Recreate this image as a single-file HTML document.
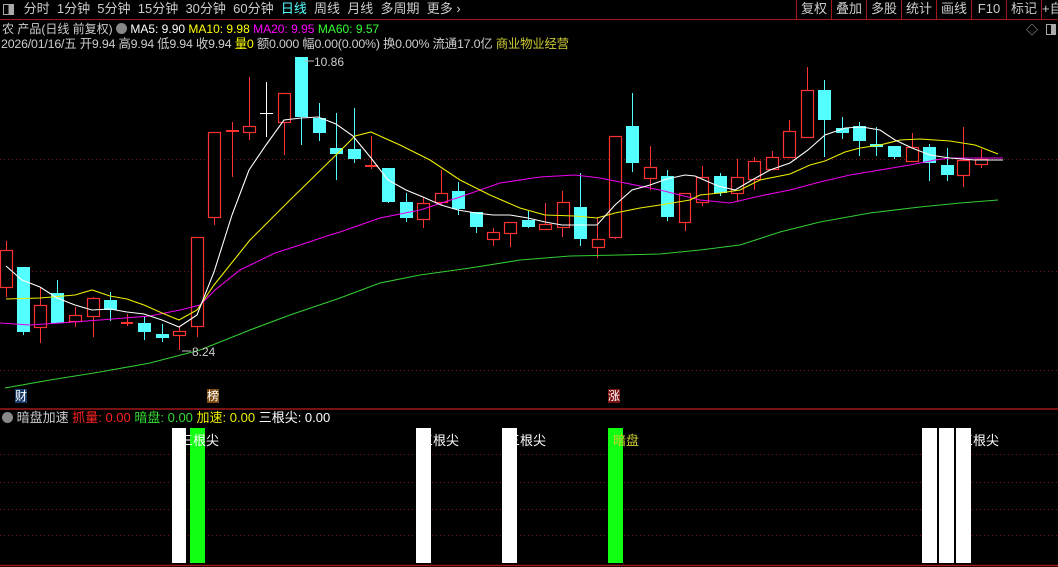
<!DOCTYPE html>
<html><head><meta charset="utf-8"><style>
body{margin:0;background:#000;width:1058px;height:567px;overflow:hidden;font-family:"Liberation Sans","Noto Sans CJK SC",sans-serif;position:relative}
.t{position:absolute;white-space:nowrap;font-size:13px;line-height:16px}
.b{position:absolute;top:0;height:19px;width:34px;border-left:1px solid #a01818;color:#ccc;font-size:13px;line-height:18px;text-align:center;white-space:nowrap;overflow:hidden}
</style></head><body>
<div class="t" style="left:3px;top:1px;color:#ccc;font-size:13px">
<span style="display:inline-block;width:11px;height:11px;border:1px solid #aaa;vertical-align:-2px;box-sizing:border-box;background:linear-gradient(90deg,#000 50%,#aaa 50%)"></span>
<span style="margin-left:6px">分时&nbsp; 1分钟&nbsp; 5分钟&nbsp; 15分钟&nbsp; 30分钟&nbsp; 60分钟&nbsp; <span style="color:#5ff">日线</span>&nbsp; 周线&nbsp; 月线&nbsp; 多周期&nbsp; 更多 ›</span></div>
<div style="position:absolute;left:0;top:19px;width:1058px;height:1px;background:#a01818"></div>
<div class="b" style="left:796px">复权</div><div class="b" style="left:831px">叠加</div><div class="b" style="left:866px">多股</div><div class="b" style="left:901px">统计</div><div class="b" style="left:936px">画线</div><div class="b" style="left:971px">F10</div><div class="b" style="left:1006px">标记</div><div class="b" style="left:1041px;width:20px;text-align:left">+自</div>
<div class="t" style="left:2px;top:21px;color:#ccc;font-size:12px">农 产品(日线 前复权) <span style="display:inline-block;width:11px;height:11px;border-radius:50%;background:#888;vertical-align:-1px"></span> <span style="color:#fff">MA5: 9.90</span> <span style="color:#ff0">MA10: 9.98</span> <span style="color:#f0f">MA20: 9.95</span> <span style="color:#3f3">MA60: 9.57</span></div>
<div class="t" style="left:1px;top:36px;color:#ccc;font-size:12.4px;letter-spacing:-0.2px">2026/01/16/五 开9.94 高9.94 低9.94 收9.94 <span style="color:#ff0">量0</span> 额0.000 幅0.00(0.00%) 换0.00% 流通17.0亿 <span style="color:#cc3">商业物业经营</span></div>
<div class="t" style="left:1026px;top:22px;color:#aaa;font-size:12px">◇</div>
<div style="position:absolute;left:1046px;top:24px;width:10px;height:11px;border:1px solid #aaa;box-sizing:border-box;background:linear-gradient(90deg,#000 50%,#aaa 50%)"></div>
<svg width="1058" height="567" style="position:absolute;left:0;top:0" xmlns="http://www.w3.org/2000/svg">
<g stroke="#7a1515" stroke-dasharray="1,3" stroke-width="1">
<line x1="0" y1="159.5" x2="1058" y2="159.5"/><line x1="0" y1="271.5" x2="1058" y2="271.5"/><line x1="0" y1="370.5" x2="1058" y2="370.5"/>
<line x1="0" y1="454.5" x2="1058" y2="454.5"/><line x1="0" y1="482.5" x2="1058" y2="482.5"/><line x1="0" y1="509.5" x2="1058" y2="509.5"/><line x1="0" y1="535.5" x2="1058" y2="535.5"/>
</g>
<line x1="0" y1="409" x2="1058" y2="409" stroke="#a01818" stroke-width="1.5"/>
<line x1="0" y1="565.5" x2="1058" y2="565.5" stroke="#a01818" stroke-width="1.5"/>
<g stroke="#ff3232" stroke-width="1" fill="none">
<line x1="6.5" y1="241" x2="6.5" y2="297"/><line x1="40.5" y1="287" x2="40.5" y2="343"/><line x1="75.5" y1="307" x2="75.5" y2="327"/><line x1="93.5" y1="297" x2="93.5" y2="337"/><line x1="127.5" y1="314" x2="127.5" y2="326"/><line x1="179.5" y1="327" x2="179.5" y2="350"/><line x1="197.5" y1="326" x2="197.5" y2="337"/><line x1="214.5" y1="217" x2="214.5" y2="225"/><line x1="232.5" y1="122" x2="232.5" y2="177"/><line x1="249.5" y1="77" x2="249.5" y2="140"/><line x1="284.5" y1="122" x2="284.5" y2="155"/><line x1="371.5" y1="136" x2="371.5" y2="169"/><line x1="423.5" y1="197" x2="423.5" y2="228"/><line x1="441.5" y1="170" x2="441.5" y2="205"/><line x1="493.5" y1="228" x2="493.5" y2="246"/><line x1="510.5" y1="233" x2="510.5" y2="247"/><line x1="545.5" y1="203" x2="545.5" y2="229"/><line x1="562.5" y1="191" x2="562.5" y2="237"/><line x1="597.5" y1="217" x2="597.5" y2="258"/><line x1="615.5" y1="237" x2="615.5" y2="239"/><line x1="650.5" y1="146" x2="650.5" y2="190"/><line x1="685.5" y1="222" x2="685.5" y2="231"/><line x1="702.5" y1="166" x2="702.5" y2="206"/><line x1="737.5" y1="159" x2="737.5" y2="201"/><line x1="754.5" y1="157" x2="754.5" y2="190"/><line x1="772.5" y1="151" x2="772.5" y2="169"/><line x1="789.5" y1="120" x2="789.5" y2="157"/><line x1="807.5" y1="67" x2="807.5" y2="90"/><line x1="912.5" y1="133" x2="912.5" y2="161"/><line x1="963.5" y1="127" x2="963.5" y2="187"/><line x1="981.5" y1="149" x2="981.5" y2="168"/>
</g>
<g stroke="#ff3232" stroke-width="1.2" fill="#000">
<rect x="0.5" y="250.5" width="12" height="37"/><rect x="34.5" y="305.5" width="12" height="22"/><rect x="69.5" y="315.5" width="12" height="6"/><rect x="87.5" y="298.5" width="12" height="18"/><rect x="173.5" y="331.5" width="12" height="4"/><rect x="191.5" y="237.5" width="12" height="89"/><rect x="208.5" y="132.5" width="12" height="85"/><rect x="243.5" y="126.5" width="12" height="6"/><rect x="278.5" y="93.5" width="12" height="29"/><rect x="417.5" y="203.5" width="12" height="16"/><rect x="435.5" y="193.5" width="12" height="9"/><rect x="487.5" y="232.5" width="12" height="7"/><rect x="504.5" y="222.5" width="12" height="11"/><rect x="539.5" y="224.5" width="12" height="5"/><rect x="557.5" y="202.5" width="12" height="25"/><rect x="592.5" y="239.5" width="12" height="8"/><rect x="609.5" y="136.5" width="12" height="101"/><rect x="644.5" y="167.5" width="12" height="11"/><rect x="679.5" y="193.5" width="11" height="29"/><rect x="696.5" y="177.5" width="12" height="25"/><rect x="731.5" y="177.5" width="12" height="16"/><rect x="748.5" y="161.5" width="12" height="18"/><rect x="766.5" y="157.5" width="12" height="12"/><rect x="783.5" y="131.5" width="12" height="26"/><rect x="801.5" y="90.5" width="12" height="47"/><rect x="906.5" y="147.5" width="12" height="14"/><rect x="957.5" y="160.5" width="12" height="15"/><rect x="975.5" y="159.5" width="12" height="5"/>
</g>
<g stroke="#ff3232" stroke-width="2"><line x1="121" y1="323" x2="133" y2="323"/><line x1="226" y1="131" x2="239" y2="131"/><line x1="365" y1="166" x2="378" y2="166"/></g>
<g stroke="#fff" stroke-width="1"><line x1="266.5" y1="82" x2="266.5" y2="137"/><line x1="260" y1="113.5" x2="273" y2="113.5"/></g>
<g stroke="#54ffff" stroke-width="1">
<line x1="23.5" y1="267" x2="23.5" y2="335"/><line x1="57.5" y1="280" x2="57.5" y2="323"/><line x1="110.5" y1="292" x2="110.5" y2="321"/><line x1="144.5" y1="317" x2="144.5" y2="340"/><line x1="162.5" y1="324" x2="162.5" y2="342"/><line x1="301.5" y1="57" x2="301.5" y2="145"/><line x1="319.5" y1="103" x2="319.5" y2="141"/><line x1="336.5" y1="113" x2="336.5" y2="180"/><line x1="354.5" y1="108" x2="354.5" y2="163"/><line x1="388.5" y1="168" x2="388.5" y2="203"/><line x1="406.5" y1="193" x2="406.5" y2="222"/><line x1="458.5" y1="182" x2="458.5" y2="215"/><line x1="476.5" y1="212" x2="476.5" y2="233"/><line x1="528.5" y1="211" x2="528.5" y2="228"/><line x1="580.5" y1="173" x2="580.5" y2="246"/><line x1="632.5" y1="93" x2="632.5" y2="172"/><line x1="667.5" y1="170" x2="667.5" y2="221"/><line x1="720.5" y1="173" x2="720.5" y2="196"/><line x1="824.5" y1="80" x2="824.5" y2="157"/><line x1="842.5" y1="117" x2="842.5" y2="139"/><line x1="859.5" y1="122" x2="859.5" y2="156"/><line x1="876.5" y1="127" x2="876.5" y2="156"/><line x1="894.5" y1="146" x2="894.5" y2="159"/><line x1="929.5" y1="144" x2="929.5" y2="181"/><line x1="947.5" y1="148" x2="947.5" y2="181"/>
</g>
<g fill="#54ffff">
<rect x="17" y="267" width="13" height="65"/><rect x="51" y="293" width="13" height="30"/><rect x="104" y="300" width="13" height="10"/><rect x="138" y="323" width="13" height="9"/><rect x="156" y="334" width="13" height="4"/><rect x="295" y="57" width="13" height="60"/><rect x="313" y="118" width="13" height="15"/><rect x="330" y="148" width="13" height="6"/><rect x="348" y="149" width="13" height="10"/><rect x="382" y="168" width="13" height="34"/><rect x="400" y="202" width="13" height="16"/><rect x="452" y="191" width="13" height="18"/><rect x="470" y="212" width="13" height="15"/><rect x="522" y="220" width="13" height="7"/><rect x="574" y="207" width="13" height="32"/><rect x="626" y="126" width="13" height="37"/><rect x="661" y="176" width="13" height="41"/><rect x="714" y="176" width="13" height="17"/><rect x="818" y="90" width="13" height="30"/><rect x="836" y="128" width="13" height="5"/><rect x="853" y="126" width="13" height="15"/><rect x="870" y="144" width="13" height="3"/><rect x="888" y="146" width="13" height="11"/><rect x="923" y="147" width="13" height="16"/><rect x="941" y="165" width="13" height="10"/>
</g>
<g fill="none" stroke-width="1.1">
<polyline stroke="#3c3" points="5,388 50,380 100,372 150,363 200,350 250,330 290,315 340,298 380,283 420,275 470,268 520,260 570,256 620,255 660,254 700,250 740,245 780,232 820,222 870,213 920,207 960,203 998,200"/>
<polyline stroke="#e0e" points="0,323 30,325 60,323 100,320 150,316 180,310 200,305 215,290 240,270 275,253 300,245 330,235 340,232 380,218 420,210 460,197 500,183 540,177 575,175 600,178 640,186 660,190 700,200 730,203 760,196 790,190 820,182 850,175 880,170 910,165 935,160 950,158 990,158 1003,158"/>
<polyline stroke="#ee0" points="6,299 40,298 75,295 92,290 110,296 127,299 144,305 162,313 179,320 197,310 214,285 250,240 290,200 336,155 355,136 371,132 400,145 430,160 460,180 490,195 520,208 545,215 575,216 597,218 615,213 640,208 660,205 690,200 700,195 720,193 740,190 760,180 790,174 810,165 825,161 845,152 860,148 880,145 900,140 920,139 950,141 975,145 998,154"/>
<polyline stroke="#fff" points="6,266 22,280 40,287 57,298 75,305 92,310 110,309 127,312 144,314 162,320 179,327 197,315 214,272 232,215 249,170 266,145 284,120 301,118 318,117 336,124 353,136 371,158 388,180 406,190 423,197 441,205 458,210 476,213 493,215 510,215 528,218 545,222 562,225 580,225 597,225 615,205 632,190 650,185 667,179 685,175 695,176 718,186 735,190 752,180 770,170 790,163 808,150 825,135 845,128 862,127 880,130 895,140 912,148 930,155 950,158 975,160 1003,160"/>
</g>
<g stroke="#bbb"><line x1="305" y1="61" x2="314" y2="61"/><line x1="182" y1="351" x2="191" y2="351"/></g>
<g fill="#fff"><rect x="172" y="428" width="14" height="135"/><rect x="416" y="428" width="15" height="135"/><rect x="502" y="428" width="15" height="135"/><rect x="922" y="428" width="15" height="135"/><rect x="939" y="428" width="15" height="135"/><rect x="956" y="428" width="15" height="135"/></g>
<g fill="#1f1"><rect x="190" y="428" width="15" height="135"/><rect x="608" y="428" width="15" height="135"/></g>
</svg>
<div class="t" style="left:314px;top:54px;color:#ccc;font-size:12px">10.86</div>
<div class="t" style="left:192px;top:344px;color:#ccc;font-size:12px">8.24</div>
<div class="t" style="left:15px;top:389px;color:#fff;background:#1a3a6a;font-size:12px;line-height:14px">财</div>
<div class="t" style="left:207px;top:389px;color:#fff;background:#7a4a10;font-size:12px;line-height:14px">榜</div>
<div class="t" style="left:608px;top:389px;color:#fff;background:#7a1010;font-size:12px;line-height:14px">涨</div>
<div class="t" style="left:2px;top:410px;color:#ccc"><span style="display:inline-block;width:11px;height:11px;border-radius:50%;background:#888;vertical-align:-1px"></span> 暗盘加速 <span style="color:#f22">抓量: 0.00</span> <span style="color:#3d3">暗盘: 0.00</span> <span style="color:#ee0">加速: 0.00</span> <span style="color:#fff">三根尖: 0.00</span></div>
<div class="t" style="left:180px;top:433px;color:#fff">三根尖</div>
<div class="t" style="left:420px;top:433px;color:#fff">三根尖</div>
<div class="t" style="left:507px;top:433px;color:#fff">三根尖</div>
<div class="t" style="left:613px;top:433px;color:#cc3">暗盘</div>
<div class="t" style="left:960px;top:433px;color:#fff">三根尖</div>
</body></html>
